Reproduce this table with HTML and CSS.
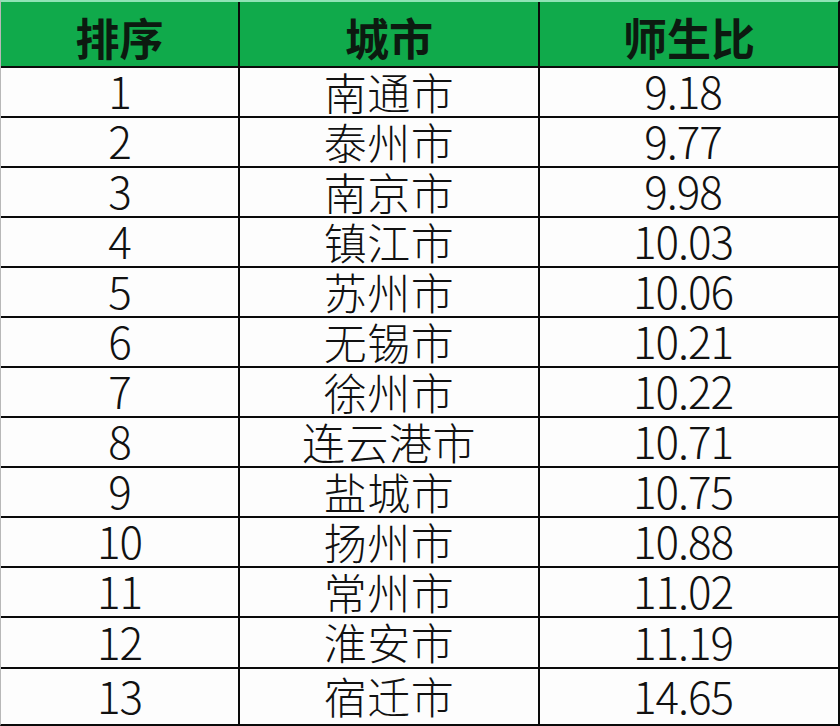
FILE: index.html
```html
<!DOCTYPE html>
<html lang="zh-CN">
<head>
<meta charset="utf-8">
<title>师生比排序</title>
<link rel="stylesheet" href="styles.css">
</head>
<body>
<div class="table">
  <div class="cell head">排序</div><div class="cell head">城市</div><div class="cell head">师生比</div>
  <div class="cell num">1</div><div class="cell city">南通市</div><div class="cell num ratio">9.18</div>
  <div class="cell num">2</div><div class="cell city">泰州市</div><div class="cell num ratio">9.77</div>
  <div class="cell num">3</div><div class="cell city">南京市</div><div class="cell num ratio">9.98</div>
  <div class="cell num">4</div><div class="cell city">镇江市</div><div class="cell num ratio">10.03</div>
  <div class="cell num">5</div><div class="cell city">苏州市</div><div class="cell num ratio">10.06</div>
  <div class="cell num">6</div><div class="cell city">无锡市</div><div class="cell num ratio">10.21</div>
  <div class="cell num">7</div><div class="cell city">徐州市</div><div class="cell num ratio">10.22</div>
  <div class="cell num">8</div><div class="cell city">连云港市</div><div class="cell num ratio">10.71</div>
  <div class="cell num">9</div><div class="cell city">盐城市</div><div class="cell num ratio">10.75</div>
  <div class="cell num">10</div><div class="cell city">扬州市</div><div class="cell num ratio">10.88</div>
  <div class="cell num">11</div><div class="cell city">常州市</div><div class="cell num ratio">11.02</div>
  <div class="cell num">12</div><div class="cell city">淮安市</div><div class="cell num ratio">11.19</div>
  <div class="cell num">13</div><div class="cell city">宿迁市</div><div class="cell num ratio">14.65</div>
</div>
</body>
</html>
```
FILE: styles.css
```css
html, body {
  margin: 0;
  padding: 0;
  background: #fdfdfd;
}
body {
  width: 840px;
  height: 726px;
  font-family: "Noto Sans CJK SC", "Noto Sans", sans-serif;
  color: #111;
}
.table {
  display: grid;
  grid-template-columns: 237px 298px 298px;
  grid-template-rows: 64px repeat(11, 48px) 49px 55px;
  gap: 2px;
  background: #0a0a0a;
  border-left: 1px solid #b8b8b8;
  border-right: 2px solid #0a0a0a;
  border-top: 2px solid #8fe3b6;
  border-bottom: 2px solid #0a0a0a;
  width: 837px;
}
.cell {
  display: flex;
  align-items: center;
  justify-content: center;
  background: #fdfdfd;
  line-height: 1;
  font-size: 44px;
  font-weight: 300;
}
.head {
  background: #10aa4b;
  font-weight: 700;
  font-size: 44px;
  padding-top: 6px;
  color: #0c1a10;
}
.num {
  font-size: 44px;
  letter-spacing: -1px;
  padding-bottom: 4px;
}
.ratio {
  padding-right: 12px;
}
.city {
  font-size: 43px;
  letter-spacing: 0.5px;
  padding-bottom: 2px;
}
```
